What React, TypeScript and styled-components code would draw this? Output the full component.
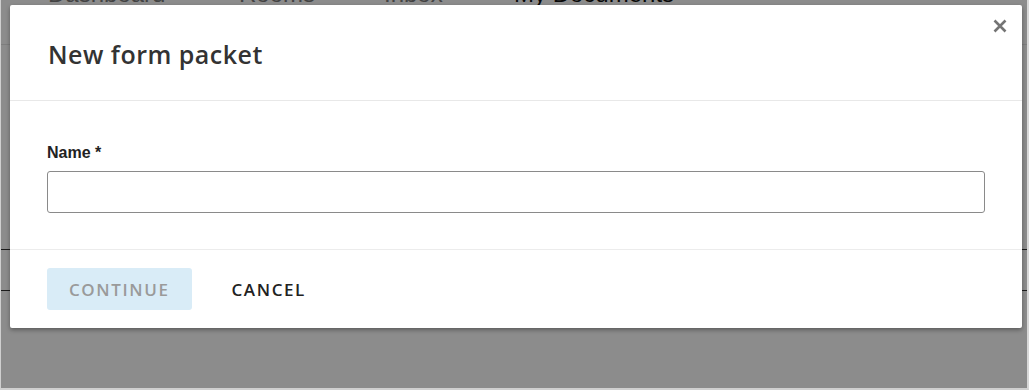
import React from 'react';
import styled, { createGlobalStyle } from 'styled-components';

const GlobalStyle = createGlobalStyle`
  html, body {
    margin: 0;
    padding: 0;
    background: #ffffff;
  }
  * {
    box-sizing: border-box;
  }
`;

const Page = styled.div`
  position: relative;
  width: 1029px;
  height: 390px;
  overflow: hidden;
  background: #ffffff;
  border-left: 1px solid #cfcfcf;
  border-right: 2px solid #d8d8d8;
  border-bottom: 2px solid #d0d0d0;
  font-family: "Open Sans", "Noto Sans", sans-serif;
`;

const Nav = styled.nav`
  display: flex;
  height: 64px;
  margin-top: -19px;
  padding-left: 47px;
  border-bottom: 1px solid #e6e6e6;
`;

const NavTab = styled.span<{ $active?: boolean; $width: number }>`
  width: ${({ $width }) => $width}px;
  font-family: "Liberation Sans", Arial, sans-serif;
  font-size: 24px;
  line-height: 26px;
  color: ${({ $active }) => ($active ? '#111111' : '#7a7a7a')};
`;

const PageBody = styled.div`
  padding-top: 204px;
`;

const PageRow = styled.div`
  height: 41px;
  border-top: 1px solid #333333;
`;

const Overlay = styled.div`
  position: absolute;
  inset: 0;
  background: rgba(0, 0, 0, 0.45);
  padding: 5px 7px 0 9px;
`;

const Modal = styled.div`
  position: relative;
  width: 1012px;
  background: #ffffff;
  border-radius: 2px;
  box-shadow: 0 2px 4px rgba(0, 0, 0, 0.35);
`;

const CloseButton = styled.button`
  position: absolute;
  top: 9px;
  right: 10px;
  width: 24px;
  height: 24px;
  padding: 0;
  border: none;
  background: transparent;
  display: flex;
  align-items: center;
  justify-content: center;
  cursor: pointer;
`;

const Header = styled.div`
  height: 96px;
  display: flex;
  align-items: center;
  padding: 2px 38px 0;
  border-bottom: 1px solid #e8e8e8;
`;

const Title = styled.h2`
  margin: 0;
  font-family: "Open Sans", "Noto Sans", sans-serif;
  font-weight: 600;
  font-size: 25px;
  letter-spacing: 0.5px;
  color: #333333;
`;

const Body = styled.div`
  padding: 42px 37px 36px;
  border-bottom: 1px solid #ececec;
`;

const Label = styled.label`
  display: block;
  font-family: "Liberation Sans", Arial, sans-serif;
  font-weight: 700;
  font-size: 16px;
  line-height: 20px;
  color: #222222;
`;

const Input = styled.input`
  display: block;
  width: 938px;
  height: 42px;
  margin-top: 8px;
  border: 1px solid #8a8a8a;
  border-radius: 3px;
  font-size: 16px;
  padding: 0 10px;
  outline: none;
`;

const Footer = styled.div`
  display: flex;
  align-items: center;
  gap: 18px;
  padding: 18px 37px 18px;
`;

const Button = styled.button<{ $primary?: boolean }>`
  height: 42px;
  padding: 0 22px;
  border: none;
  border-radius: 3px;
  background: ${({ $primary }) => ($primary ? '#d9ecf7' : 'transparent')};
  color: ${({ $primary }) => ($primary ? '#9a9a9a' : '#222222')};
  font-family: "Open Sans", "Noto Sans", sans-serif;
  font-weight: 600;
  font-size: 17px;
  letter-spacing: 1.6px;
  text-transform: uppercase;
  cursor: pointer;
`;

const CloseIcon = () => (
  <svg width="14" height="14" viewBox="0 0 14 14">
    <path d="M1.5 1.5 L12.5 12.5 M12.5 1.5 L1.5 12.5" stroke="#747474" strokeWidth="2.6" strokeLinecap="butt" />
  </svg>
);

const App = (): JSX.Element => (
  <>
    <GlobalStyle />
    <Page>
      <Nav>
        <NavTab $width={191}>Dashboard</NavTab>
        <NavTab $width={145}>Rooms</NavTab>
        <NavTab $width={130}>Inbox</NavTab>
        <NavTab $width={200} $active>My Documents</NavTab>
      </Nav>
      <PageBody>
        <PageRow />
        <PageRow />
      </PageBody>
      <Overlay>
        <Modal>
          <CloseButton aria-label="Close">
            <CloseIcon />
          </CloseButton>
          <Header>
            <Title>New form packet</Title>
          </Header>
          <Body>
            <Label htmlFor="packet-name">Name *</Label>
            <Input id="packet-name" type="text" />
          </Body>
          <Footer>
            <Button $primary disabled>Continue</Button>
            <Button>Cancel</Button>
          </Footer>
        </Modal>
      </Overlay>
    </Page>
  </>
);

export default App;
